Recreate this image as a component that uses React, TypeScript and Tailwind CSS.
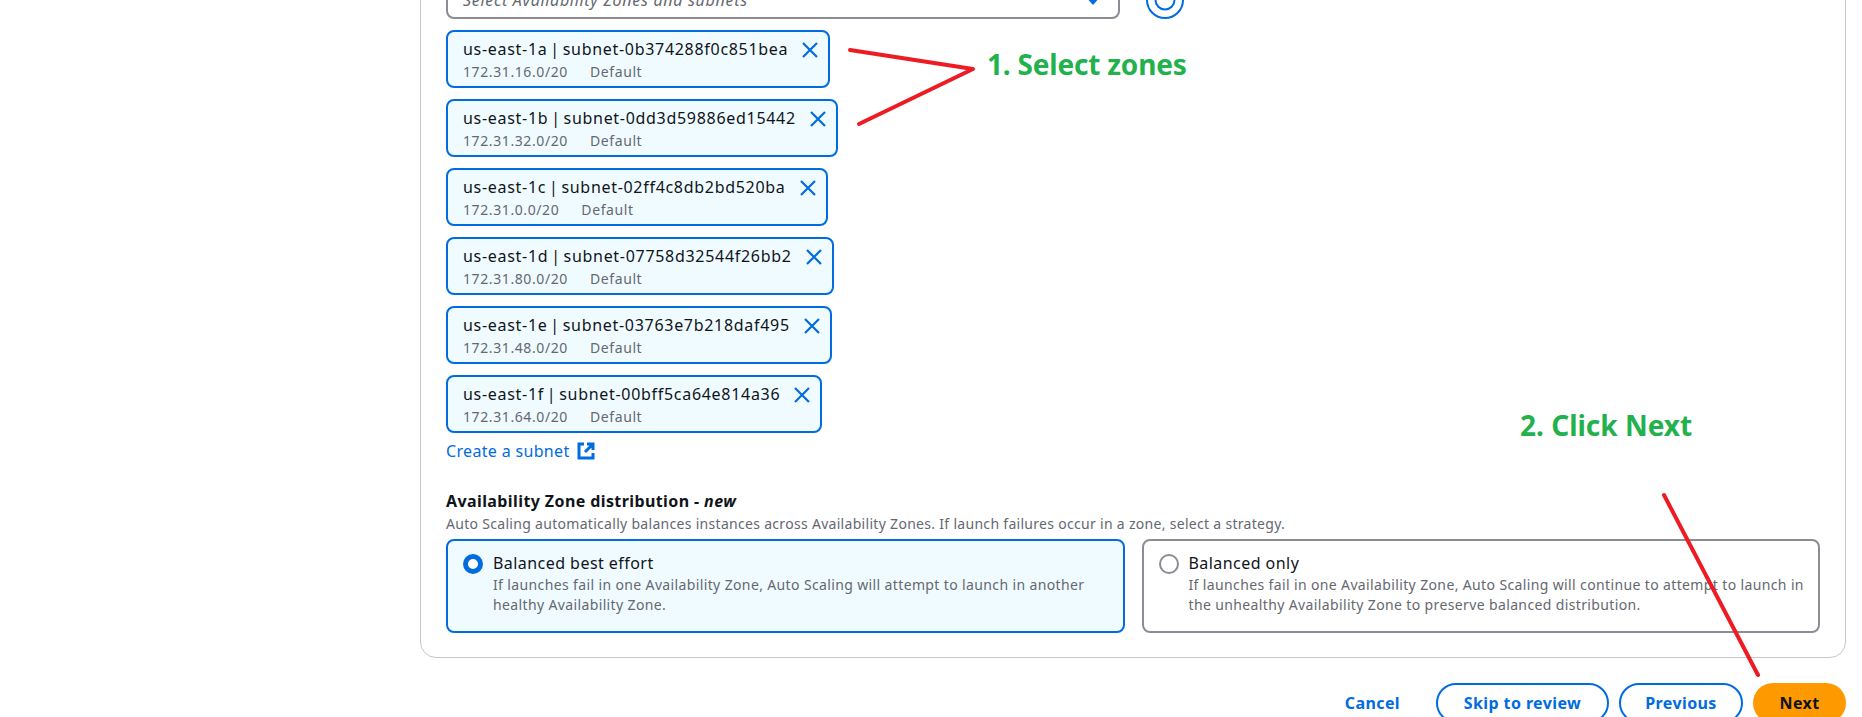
const subnets = [
  { zone: 'us-east-1a', id: 'subnet-0b374288f0c851bea', cidr: '172.31.16.0/20' },
  { zone: 'us-east-1b', id: 'subnet-0dd3d59886ed15442', cidr: '172.31.32.0/20' },
  { zone: 'us-east-1c', id: 'subnet-02ff4c8db2bd520ba', cidr: '172.31.0.0/20' },
  { zone: 'us-east-1d', id: 'subnet-07758d32544f26bb2', cidr: '172.31.80.0/20' },
  { zone: 'us-east-1e', id: 'subnet-03763e7b218daf495', cidr: '172.31.48.0/20' },
  { zone: 'us-east-1f', id: 'subnet-00bff5ca64e814a36', cidr: '172.31.64.0/20' },
];

const DismissIcon = () => (
  <svg width="16" height="16" viewBox="0 0 16 16" fill="none" stroke="#006ce0" strokeWidth="2.2" className="mt-[3px] shrink-0">
    <path d="M1 1l14 14M15 1L1 15" />
  </svg>
);

const SubnetToken = ({ zone, id, cidr }: { zone: string; id: string; cidr: string }) => (
  <div className="flex w-fit h-[58px] items-start gap-[14px] rounded-lg border-2 border-[#006ce0] bg-[#f0fbff] pl-[15px] pr-[10px] pt-[7px]">
    <div>
      <div className="text-base leading-5 tracking-[0.7px] [word-spacing:-2px] text-[#0f141a] whitespace-nowrap">
        {zone} | {id}
      </div>
      <div className="flex gap-[22px] text-sm leading-[26px] h-[24px] tracking-[0.6px] text-[#656871]">
        <span>{cidr}</span>
        <span>Default</span>
      </div>
    </div>
    <DismissIcon />
  </div>
);

const RadioCard = ({ label, text, selected }: { label: string; text: string; selected?: boolean }) => (
  <div
    className={
      selected
        ? 'flex-1 h-[94px] flex gap-[10px] rounded-lg border-2 border-[#006ce0] bg-[#f0fbff] pl-[15px] pr-[14px] pt-[12px]'
        : 'flex-1 h-[94px] flex gap-[10px] rounded-lg border-2 border-[#8c8c94] bg-white pl-[15px] pr-[14px] pt-[12px]'
    }
  >
    {selected ? (
      <span className="mt-[1px] size-5 shrink-0 rounded-full border-[5px] border-[#006ce0] bg-white" />
    ) : (
      <span className="mt-[1px] size-5 shrink-0 rounded-full border-2 border-[#8c8c94] bg-white" />
    )}
    <div>
      <div className="text-base leading-5 tracking-[0.45px] text-[#0f141a]">{label}</div>
      <div className="mt-[2px] text-sm leading-5 tracking-[0.37px] text-[#656871]">{text}</div>
    </div>
  </div>
);

const App = () => {
  return (
    <div className="relative h-[717px] overflow-hidden bg-white font-['Noto_Sans',sans-serif]">
      <div className="ml-[420px] mr-[16px] -mt-[60px]">
        <div className="rounded-b-2xl border border-[#c6c6cd] px-[25px] pt-[40px] h-[718px]">
          <div className="flex items-center gap-[26px]">
            <div className="w-[674px] h-[38px] flex items-center justify-between rounded-lg border-2 border-[#8c8c94] pl-[15px] pr-[17px]">
              <span className="text-base italic tracking-[0.7px] text-[#656871]">Select Availability Zones and subnets</span>
              <svg width="16" height="9" viewBox="0 0 16 9" fill="#006ce0">
                <path d="M0 0h16L8 9z" />
              </svg>
            </div>
            <div className="size-[38px] flex items-center justify-center rounded-full border-2 border-[#006ce0]">
              <svg width="22" height="22" viewBox="0 0 22 22" fill="none" stroke="#006ce0" strokeWidth="2">
                <circle cx="11" cy="11" r="9.5" />
              </svg>
            </div>
          </div>

          <div className="mt-[11px] flex flex-col gap-[11px]">
            {subnets.map((s) => (
              <SubnetToken key={s.id} {...s} />
            ))}
          </div>

          <a className="mt-[8px] flex items-center gap-[7px] text-base leading-5 tracking-[0.33px] text-[#006ce0]">
            Create a subnet
            <svg width="18" height="18" viewBox="0 0 18 18" fill="none" stroke="#006ce0" strokeWidth="3">
              <path d="M7 2H2v14h14v-5M10 2h6v6M16 2L8 10" />
            </svg>
          </a>

          <h3 className="mt-[30px] text-base leading-5 font-bold tracking-[0.4px] text-[#0f141a]">
            Availability Zone distribution - <i>new</i>
          </h3>
          <p className="mt-[3px] text-sm leading-5 tracking-[0.3px] text-[#656871]">
            Auto Scaling automatically balances instances across Availability Zones. If launch failures occur in a zone, select a strategy.
          </p>

          <div className="mt-[5px] flex gap-[17px]">
            <RadioCard
              selected
              label="Balanced best effort"
              text="If launches fail in one Availability Zone, Auto Scaling will attempt to launch in another healthy Availability Zone."
            />
            <RadioCard
              label="Balanced only"
              text="If launches fail in one Availability Zone, Auto Scaling will continue to attempt to launch in the unhealthy Availability Zone to preserve balanced distribution."
            />
          </div>
        </div>

        <div className="mt-[25px] flex items-center justify-end gap-[10px] text-base font-bold tracking-[0.4px]">
          <button className="mr-[26px] text-[#006ce0]">Cancel</button>
          <button className="h-[40px] w-[173px] rounded-full border-2 border-[#006ce0] text-[#006ce0]">Skip to review</button>
          <button className="h-[40px] w-[124px] rounded-full border-2 border-[#006ce0] text-[#006ce0]">Previous</button>
          <button className="h-[40px] w-[93px] rounded-full bg-[#ff9900] text-[#0f141a]">Next</button>
        </div>
      </div>

      {/* annotations drawn on top of the screenshot */}
      <svg className="absolute inset-0 pointer-events-none" width="1862" height="717" fill="none">
        <polyline points="850,50 973,69 859,124" stroke="#ed1c24" strokeWidth="4" strokeLinecap="round" strokeLinejoin="round" />
        <line x1="1664" y1="495" x2="1758" y2="675" stroke="#ed1c24" strokeWidth="4" strokeLinecap="round" />
      </svg>
      <div className="absolute left-[987px] top-[46px] text-[28px] leading-9 font-bold tracking-[-0.2px] text-[#22b14c]">1. Select zones</div>
      <div className="absolute left-[1520px] top-[407px] text-[28px] leading-9 font-bold text-[#22b14c]">2. Click Next</div>
    </div>
  );
};

export default App;
